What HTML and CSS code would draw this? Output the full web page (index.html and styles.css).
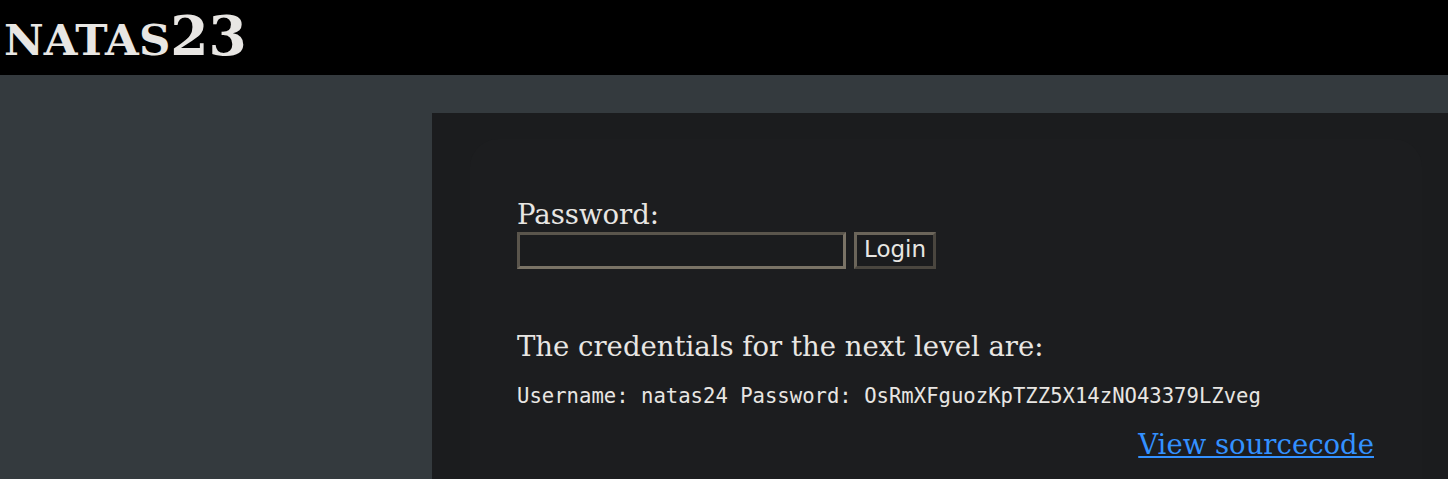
FILE: index.html
```html
<!DOCTYPE html>
<html>
<head>
<meta charset="utf-8">
<link rel="stylesheet" href="styles.css">
</head>
<body>
<h1 class="title"><span class="caps">NATAS</span>23</h1>
<div class="main">
  <div class="content">
    <div class="inner">
      <form class="login">
        <div class="label">Password:</div>
        <div class="row">
          <input class="field" type="text">
          <button class="btn" type="button">Login</button>
        </div>
      </form>
      <p class="creds">The credentials for the next level are:</p>
      <pre class="mono">Username: natas24 Password: OsRmXFguozKpTZZ5X14zNO43379LZveg</pre>
      <div class="viewsource"><a href="#">View sourcecode</a></div>
    </div>
  </div>
</div>
</body>
</html>
```
FILE: styles.css
```css
html, body {
  margin: 0;
  padding: 0;
  height: 100%;
  overflow: hidden;
}
body {
  background: #343a3e;
  font-family: "DejaVu Serif", serif;
  color: #e8e6e3;
}
.title {
  margin: 0;
  height: 75px;
  background: #000;
  color: #e8e6e3;
  font-family: "DejaVu Serif", serif;
  font-weight: bold;
  font-size: 55px;
  line-height: 72px;
  padding-left: 4px;
  box-sizing: border-box;
  overflow: hidden;
}
.caps {
  font-size: 43.5px;
}
.main {
  display: flex;
  padding-top: 38px;
  padding-left: 432px;
}
.content {
  background: #1b1c1e;
  width: 1016px;
  height: 366px;
  flex-shrink: 0;
  padding: 26px 0 0 38px;
  box-sizing: border-box;
  overflow: hidden;
}
.inner {
  background: #1c1d1f;
  border-radius: 28px;
  width: 952px;
  height: 380px;
  padding: 59px 0 0 47px;
  box-sizing: border-box;
}
.login {
  margin: 0;
}
.label {
  font-size: 27.5px;
  line-height: 32px;
}
.row {
  display: flex;
  gap: 8px;
  margin-top: 2px;
}
.field {
  width: 329px;
  height: 37px;
  box-sizing: border-box;
  background: #1b1c1e;
  border: 3px solid;
  border-color: #5a554c #7a7366 #7a7366 #5a554c;
  margin: 0;
}
.btn {
  width: 82px;
  height: 37px;
  box-sizing: border-box;
  background: #1b1c1e;
  color: #e8e6e3;
  border: 3px solid;
  border-color: #6b655a #4a463f #4a463f #6b655a;
  font-family: "DejaVu Sans", sans-serif;
  font-size: 23px;
  line-height: 28px;
  padding: 0 0 3px 0;
  margin: 0;
}
.creds {
  font-size: 27.5px;
  line-height: 32px;
  margin: 61px 0 0 0;
}
.mono {
  font-family: "DejaVu Sans Mono", monospace;
  font-size: 20.6px;
  line-height: 26px;
  margin: 21px 0 0 0;
}
.viewsource {
  width: 857px;
  text-align: right;
  font-size: 27.5px;
  line-height: 32px;
  margin-top: 19px;
}
.viewsource a {
  color: #3391ff;
}
```
